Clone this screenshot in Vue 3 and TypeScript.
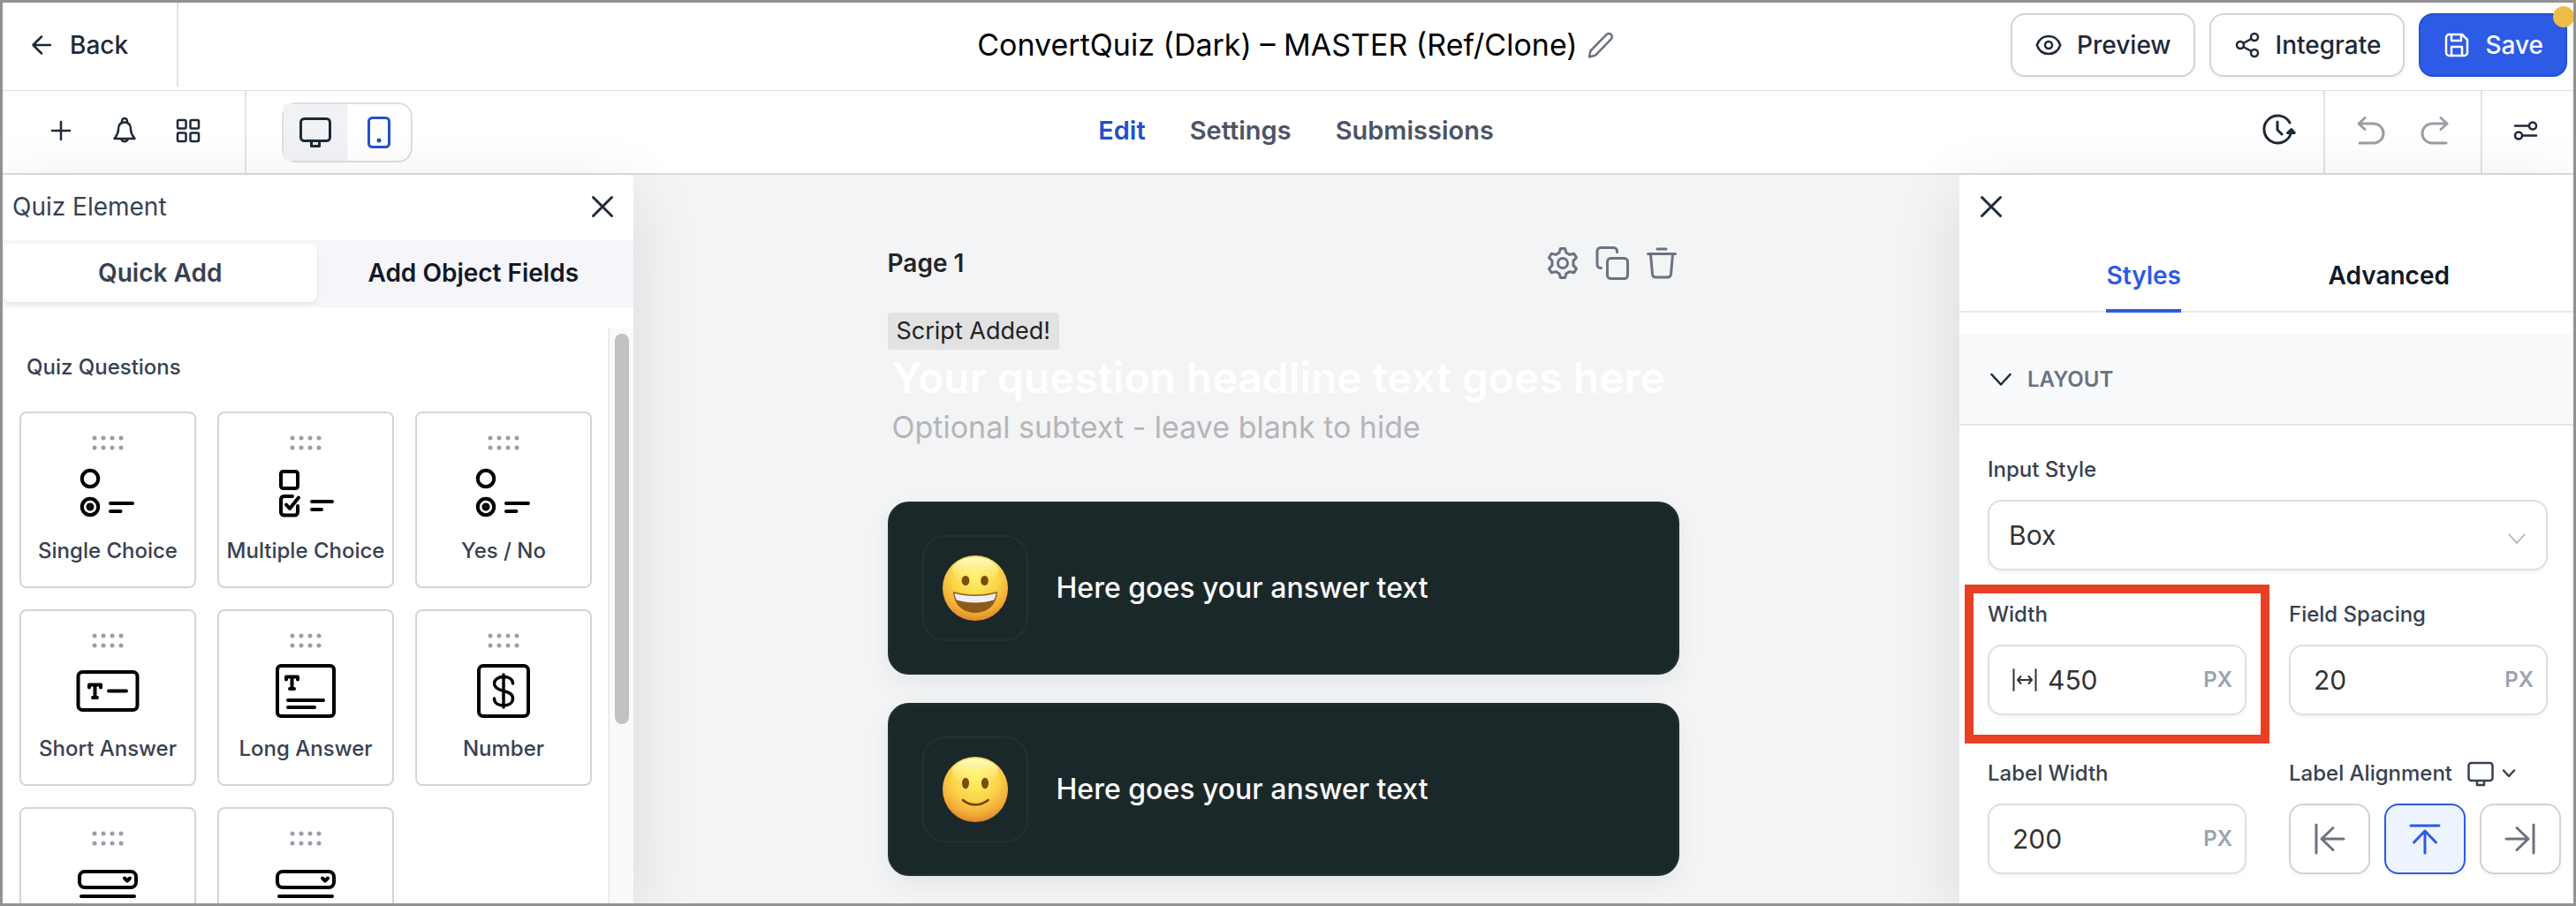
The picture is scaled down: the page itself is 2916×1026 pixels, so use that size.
<script setup lang="ts">
import { ref } from 'vue'

interface QuizElement {
  label: string
  icon: 'radio' | 'check' | 'short' | 'long' | 'number' | 'dropdown'
}

const elements: QuizElement[] = [
  { label: 'Single Choice', icon: 'radio' },
  { label: 'Multiple Choice', icon: 'check' },
  { label: 'Yes / No', icon: 'radio' },
  { label: 'Short Answer', icon: 'short' },
  { label: 'Long Answer', icon: 'long' },
  { label: 'Number', icon: 'number' },
  { label: '', icon: 'dropdown' },
  { label: '', icon: 'dropdown' },
]

const answers = [
  { text: 'Here goes your answer text', face: 'grin' },
  { text: 'Here goes your answer text', face: 'smile' },
]

const inputStyle = ref('Box')
const width = ref('450')
const spacing = ref('20')
const labelWidth = ref('200')
const alignment = ref('top')
const device = ref('mobile')
</script>

<template>
  <div class="app">
    <header class="topbar">
      <div class="top-left">
        <button class="back" type="button">
          <svg width="24" height="24" viewBox="0 0 24 24" class="line"><path d="M22 12H3M12 2.500L2.500 12l9.500 9.500" /></svg>
          Back
        </button>
      </div>
      <div class="title">
        <h1>ConvertQuiz (Dark) – MASTER (Ref/Clone)</h1>
        <button type="button" class="bare" aria-label="Rename">
          <svg width="32" height="32" viewBox="0 0 32 32" class="line pencil"><path d="M3 29.500l1.500-7L22.500 4.200a3.600 3.600 0 0 1 5.200 5.200L9.800 27.800z" /></svg>
        </button>
      </div>
      <div class="actions">
        <button type="button" class="btn">
          <svg width="32" height="32" viewBox="0 0 32 32" class="line"><path d="M2.800 16C5 9.500 10 6 16 6s11 3.500 13.200 10C27 22.500 22 26 16 26S5 22.500 2.800 16z" /><circle cx="16" cy="16" r="4" /></svg>
          Preview
        </button>
        <button type="button" class="btn">
          <svg width="32" height="32" viewBox="0 0 32 32" class="line"><circle cx="8" cy="16" r="4" /><circle cx="24" cy="7" r="4" /><circle cx="24" cy="25" r="4" /><path d="M11.500 14l9-5M11.500 18l9 5" /></svg>
          Integrate
        </button>
        <button type="button" class="btn primary">
          <svg width="32" height="32" viewBox="0 0 32 32" class="line"><path d="M7.500 4H22l6 6v14.500a3.500 3.500 0 0 1-3.500 3.500h-17A3.500 3.500 0 0 1 4 24.500v-17A3.500 3.500 0 0 1 7.500 4z" /><path d="M10 4.500V11h11V4.500M10 28V18h12v10" /></svg>
          Save
          <span class="unsaved"></span>
        </button>
      </div>
    </header>

    <div class="toolbar">
      <div class="tools-left">
        <div class="quick">
          <button type="button" class="bare" aria-label="Add">
            <svg width="32" height="32" viewBox="0 0 32 32" class="line"><path d="M16 6v20M6 16h20" /></svg>
          </button>
          <button type="button" class="bare" aria-label="Alerts">
            <svg width="32" height="32" viewBox="0 0 32 32" class="line"><path d="M16 6.500c-5 0-7 3.500-7 8 0 5-2 7-4.500 10.500h23C25 21.500 23 19.500 23 14.500c0-4.500-2-8-7-8z" /><path d="M13 6.500V5a3 3 0 0 1 6 0v1.500M12.500 25.500a3.600 3.600 0 0 0 7 0" /></svg>
          </button>
          <button type="button" class="bare" aria-label="Blocks">
            <svg width="32" height="32" viewBox="0 0 32 32" class="line"><rect x="4" y="4" width="9.500" height="9.500" rx="1.500" /><rect x="18.500" y="4" width="9.500" height="9.500" rx="1.500" /><rect x="4" y="18.500" width="9.500" height="9.500" rx="1.500" /><rect x="18.500" y="18.500" width="9.500" height="9.500" rx="1.500" /></svg>
          </button>
        </div>
        <div class="devices">
          <button type="button" class="device desktop" aria-label="Desktop" @click="device = 'desktop'">
            <svg width="40" height="40" viewBox="0 0 40 40" class="line thick"><rect x="3.500" y="4.500" width="33" height="25" rx="4" /><path d="M15.500 30v5.500h9V30" /></svg>
          </button>
          <button type="button" class="device" :class="{ on: device === 'mobile' }" aria-label="Mobile" @click="device = 'mobile'">
            <svg width="40" height="40" viewBox="0 0 40 40" class="line thick"><rect x="8.500" y="3.500" width="23" height="33" rx="4" /><circle cx="20" cy="29" r="1.500" fill="currentColor" stroke-width="2" /></svg>
          </button>
        </div>
      </div>
      <nav class="nav">
        <a href="#edit" class="current">Edit</a>
        <a href="#settings">Settings</a>
        <a href="#submissions">Submissions</a>
      </nav>
      <div class="tools-right">
        <button type="button" class="bare history" aria-label="History">
          <svg width="40" height="40" viewBox="0 0 40 40" class="line thick"><path d="M33 11A15.500 15.500 0 1 0 34.500 22" /><path d="M30.500 22.500l4.300-4 3.400 4zM19 10v9l5 5" /></svg>
        </button>
        <div class="undo">
          <button type="button" class="bare" aria-label="Undo">
            <svg width="36" height="36" viewBox="0 0 36 36" class="line thick"><path d="M11 3.500L4 10l7 6.500M4 10h17a11 11 0 0 1 0 22H5" /></svg>
          </button>
          <button type="button" class="bare" aria-label="Redo">
            <svg width="36" height="36" viewBox="0 0 36 36" class="line thick"><path d="M25 3.500L32 10l-7 6.500M32 10H15a11 11 0 0 0 0 22h16" /></svg>
          </button>
        </div>
        <button type="button" class="bare sliders" aria-label="Options">
          <svg width="32" height="32" viewBox="0 0 32 32" class="line"><circle cx="24" cy="10.500" r="4" /><path d="M4 10.500h15.500M12.500 21.500H28" /><circle cx="8" cy="21.500" r="4" /></svg>
        </button>
      </div>
    </div>

    <div class="body">
      <aside class="panel left">
        <div class="panel-head">
          <h2>Quiz Element</h2>
          <button type="button" class="bare" aria-label="Close elements">
            <svg width="32" height="32" viewBox="0 0 32 32" class="line thick"><path d="M5.500 5.500l21 21M26.500 5.500l-21 21" /></svg>
          </button>
        </div>
        <div class="segments">
          <button type="button" class="segment on">Quick Add</button>
          <button type="button" class="segment">Add Object Fields</button>
        </div>
        <div class="scroller">
          <div class="library">
            <h3>Quiz Questions</h3>
            <div class="grid">
              <button v-for="(item, i) in elements" :key="i" type="button" class="card">
                <svg width="40" height="20" viewBox="0 0 40 20" fill="#9a9ea8">
                  <template v-for="x in 4" :key="x">
                    <circle :cx="x * 10 - 5" cy="4" r="2.500" /><circle :cx="x * 10 - 5" cy="15" r="2.500" />
                  </template>
                </svg>
                <svg width="72" height="72" viewBox="0 0 72 72" class="glyph">
                  <g v-if="item.icon === 'radio'">
                    <circle cx="16" cy="20" r="9.200" /><circle cx="16" cy="52" r="9.200" /><circle cx="16" cy="52" r="2.500" />
                    <path d="M39 48h25M39 57h11.500" />
                  </g>
                  <g v-else-if="item.icon === 'check'">
                    <rect x="8" y="12" width="19" height="19" rx="2.500" />
                    <path d="M21 40h-9.500a3.500 3.500 0 0 0-3.500 3.500v14.500a3.500 3.500 0 0 0 3.500 3.500h12a3.500 3.500 0 0 0 3.500-3.500V51" />
                    <path d="M14 49.500l4 4.500L28 41.500M43 46h23M43 55h11" />
                  </g>
                  <g v-else-if="item.icon === 'short'">
                    <rect x="2.500" y="15" width="67" height="43" rx="5" />
                    <path d="M15 32.500v-3h13v3M21.500 29.500V44M19 44h5M37 36.500h20" />
                  </g>
                  <g v-else-if="item.icon === 'long'">
                    <rect x="4" y="8" width="64" height="57" rx="4" />
                    <path d="M14 23.500v-3h13v3M20.500 20.500V34M18 34h5M16 47h40M16 55h30" />
                  </g>
                  <g v-else-if="item.icon === 'number'">
                    <rect x="8" y="8" width="56" height="57" rx="5" />
                    <path d="M46.500 28c0-5-4.500-7.500-10.500-7.500S25.500 23.500 25.500 28s4 6.800 10.500 8.500 10.500 3.500 10.500 8.500-4.500 8-10.500 8-10.500-3-10.500-8M36 18v37" stroke-width="3.500" />
                  </g>
                  <g v-else>
                    <rect x="4" y="17" width="64" height="18" rx="6" />
                    <path d="M55 24.500l3 3 3-3" /><path d="M6 45h60" />
                  </g>
                </svg>
                <span v-if="item.label">{{ item.label }}</span>
              </button>
            </div>
          </div>
          <div class="track"><div class="thumb"></div></div>
        </div>
      </aside>

      <main class="canvas">
        <section class="page">
          <div class="page-head">
            <h2>Page 1</h2>
            <div class="page-tools">
              <button type="button" class="bare" aria-label="Page settings">
                <svg width="40" height="40" viewBox="0 0 40 40" class="line thick"><path d="M17.400 3.500h5.200l1.400 4.700 3.900 2.200 4.900-1.200 2.700 4.600-3.500 3.600v5.200l3.500 3.600-2.700 4.600-4.900-1.200-3.900 2.200-1.400 4.700h-5.200L16 31.800l-3.900-2.200-4.900 1.200-2.700-4.600L8 22.600v-5.200l-3.500-3.600 2.700-4.600 4.900 1.200L16 8.200z" /><circle cx="20" cy="20" r="5.500" /></svg>
              </button>
              <button type="button" class="bare" aria-label="Duplicate page">
                <svg width="40" height="40" viewBox="0 0 40 40" class="line thick"><path d="M7.500 25.500H7A4 4 0 0 1 3 21.500V6.500A4 4 0 0 1 7 2.500h14.500a4 4 0 0 1 4 4V7.500" /><rect x="14.500" y="14.500" width="23" height="23" rx="4" /></svg>
              </button>
              <button type="button" class="bare" aria-label="Delete page">
                <svg width="40" height="40" viewBox="0 0 40 40" class="line thick"><path d="M4.500 9.500h31M15 4h10M7.500 10l2 22.500a4 4 0 0 0 4 3.500h13a4 4 0 0 0 4-3.500l2-22.500" /></svg>
              </button>
            </div>
          </div>
          <span class="chip">Script Added!</span>
          <div class="question">
            <p class="headline">Your question headline text goes here</p>
            <p class="subtext">Optional subtext - leave blank to hide</p>
          </div>
          <div class="answers">
            <button v-for="(a, i) in answers" :key="i" type="button" class="answer">
              <span class="emoji">
                <svg width="76" height="76" viewBox="0 0 76 76">
                  <defs>
                    <radialGradient :id="'skin' + i" cx="50%" cy="30%" r="72%">
                      <stop offset="0" stop-color="#fff46a" />
                      <stop offset=".5" stop-color="#fbd449" />
                      <stop offset=".8" stop-color="#f2ac38" />
                      <stop offset="1" stop-color="#d9822b" />
                    </radialGradient>
                    <linearGradient :id="'shine' + i" x1="0" y1="0" x2="0" y2="1">
                      <stop offset="0" stop-color="#fffbd0" />
                      <stop offset="1" stop-color="#fff36b" stop-opacity="0" />
                    </linearGradient>
                  </defs>
                  <circle cx="38" cy="38" r="37" :fill="'url(#skin' + i + ')'" />
                  <ellipse cx="38" cy="18" rx="26" ry="15" :fill="'url(#shine' + i + ')'" />
                  <g v-if="a.face === 'grin'">
                    <ellipse cx="27" cy="29.500" rx="4.300" ry="5.500" fill="#7d4a10" />
                    <ellipse cx="48.500" cy="29.500" rx="4.300" ry="5.500" fill="#7d4a10" />
                    <path d="M13 42c16 4.500 34 4.500 50 0C62 57 52 66 38 66S14 57 13 42z" fill="#8e5a1c" />
                    <path d="M14.500 44c15 4 32 4 47 0-.5 3-1.200 5.500-2.500 7.500-13 4-29 4-42 0-1.300-2-2-4.500-2.500-7.500z" fill="#eff0f6" />
                  </g>
                  <g v-else>
                    <ellipse cx="27" cy="31" rx="4" ry="6.200" fill="#7d4a10" />
                    <ellipse cx="49" cy="31" rx="4" ry="6.200" fill="#7d4a10" />
                    <path d="M24 50c8 7 20 7 28.500 0" fill="none" stroke="#6b4208" stroke-width="2.500" stroke-linecap="round" />
                  </g>
                </svg>
              </span>
              {{ a.text }}
            </button>
          </div>
        </section>
      </main>

      <aside class="panel right">
        <div class="close-row">
          <button type="button" class="bare" aria-label="Close styles">
            <svg width="32" height="32" viewBox="0 0 32 32" class="line thick"><path d="M5.500 5.500l21 21M26.500 5.500l-21 21" /></svg>
          </button>
        </div>
        <div class="tabs">
          <div class="tab-cell"><button type="button" class="tab on">Styles</button></div>
          <div class="tab-cell"><button type="button" class="tab">Advanced</button></div>
        </div>
        <button type="button" class="accordion">
          <svg width="24" height="24" viewBox="0 0 24 24" class="line"><path d="M1.500 6L12 17.500 22.500 6" /></svg>
          LAYOUT
        </button>
        <div class="form">
          <div class="field wide">
            <label for="input-style">Input Style</label>
            <div class="control">
              <select id="input-style" v-model="inputStyle">
                <option>Box</option>
                <option>Line</option>
              </select>
              <svg width="20" height="12" viewBox="0 0 20 12" class="caret"><path d="M1 1l9 10 9-10" /></svg>
            </div>
          </div>
          <div class="field marked">
            <label for="width">Width</label>
            <div class="control box">
              <svg width="28" height="28" viewBox="0 0 28 28" class="line measure"><path d="M1.500 2v24M26.500 2v24M6 14h16M9.500 10L6 14l3.500 4M18.500 10l3.500 4-3.500 4" /></svg>
              <input id="width" v-model="width" type="text" />
              <span class="unit">PX</span>
            </div>
          </div>
          <div class="field">
            <label for="spacing">Field Spacing</label>
            <div class="control box">
              <input id="spacing" v-model="spacing" type="text" />
              <span class="unit">PX</span>
            </div>
          </div>
          <div class="field">
            <label for="label-width">Label Width</label>
            <div class="control box">
              <input id="label-width" v-model="labelWidth" type="text" />
              <span class="unit">PX</span>
            </div>
          </div>
          <div class="field">
            <div class="label-row">
              <span id="align-label">Label Alignment</span>
              <button type="button" class="bare picker" aria-label="Choose device">
                <svg width="32" height="32" viewBox="0 0 32 32" class="line"><rect x="2.500" y="4" width="27" height="20" rx="3" /><path d="M12 24.500V29h8v-4.500" /></svg>
                <svg width="16" height="12" viewBox="0 0 16 12" class="line"><path d="M2 2.500L8 9l6-6.500" /></svg>
              </button>
            </div>
            <div class="aligns" role="group" aria-labelledby="align-label">
              <button type="button" class="align" :class="{ on: alignment === 'left' }" aria-label="Left" @click="alignment = 'left'">
                <svg width="36" height="36" viewBox="0 0 36 36" class="line thick"><path d="M3 2v32M34 18H9M22 5.500L9 18l13 12.500" /></svg>
              </button>
              <button type="button" class="align" :class="{ on: alignment === 'top' }" aria-label="Top" @click="alignment = 'top'">
                <svg width="36" height="36" viewBox="0 0 36 36" class="line thick"><path d="M2 3h32M18 34V9M5.500 22L18 9l12.500 13" /></svg>
              </button>
              <button type="button" class="align" :class="{ on: alignment === 'right' }" aria-label="Right" @click="alignment = 'right'">
                <svg width="36" height="36" viewBox="0 0 36 36" class="line thick"><path d="M33 2v32M2 18h25M14 5.500L27 18 14 30.500" /></svg>
              </button>
            </div>
          </div>
        </div>
      </aside>
    </div>
  </div>
</template>

<style>
body {
  margin: 0;
  overflow: hidden;
}
</style>

<style scoped>
.app {
  box-sizing: border-box;
  display: flex;
  flex-direction: column;
  height: 100vh;
  border: 3px solid #929292;
  overflow: hidden;
  background: #fff;
  color: #1f2937;
  font-family: Inter, 'Liberation Sans', sans-serif;
  font-size: 28px;
  line-height: 36px;
}
.app * {
  box-sizing: border-box;
}
h1, h2, h3, p {
  margin: 0;
}
button, input, select {
  font: inherit;
  color: inherit;
}
button {
  cursor: pointer;
}
svg {
  display: block;
  flex: none;
}
.line {
  fill: none;
  stroke: currentColor;
  stroke-width: 2.5;
  stroke-linecap: round;
  stroke-linejoin: round;
}
.thick {
  stroke-width: 3;
}
.bare {
  display: flex;
  padding: 0;
  border: 0;
  background: none;
}

/* top bar */
.topbar {
  display: grid;
  grid-template-columns: 1fr auto 1fr;
  height: 100px;
  flex: none;
  border-bottom: 1px solid #dfdfe1;
}
.top-left {
  display: flex;
}
.back {
  display: flex;
  align-items: center;
  gap: 20px;
  width: 199px;
  height: 95px;
  padding: 0 0 0 32px;
  border: 0;
  border-right: 2px solid #e2e3e6;
  background: none;
  font-size: 28px;
  font-weight: 500;
}
.title {
  display: flex;
  align-items: center;
  gap: 10px;
  padding: 0 0 4px 18px;
  color: #000;
}
.title h1 {
  font-size: 34px;
  font-weight: 400;
  line-height: 44px;
}
.pencil {
  color: #6b7280;
}
.actions {
  display: flex;
  align-items: center;
  justify-content: flex-end;
  gap: 16px;
  padding: 0 7px 4px 0;
}
.btn {
  position: relative;
  display: flex;
  align-items: center;
  gap: 16px;
  height: 72px;
  padding: 0 25px;
  border: 2px solid #d1d5db;
  border-radius: 16px;
  background: #fff;
  font-size: 28px;
  font-weight: 500;
  box-shadow: 0 2px 4px rgba(0, 0, 0, 0.05);
}
.primary {
  border-color: #244fd0;
  background: #2d5be6;
  color: #fff;
}
.unsaved {
  position: absolute;
  top: -10px;
  right: -10px;
  width: 24px;
  height: 24px;
  border-radius: 50%;
  background: #eebd48;
}

/* toolbar */
.toolbar {
  display: grid;
  grid-template-columns: 1fr auto 1fr;
  height: 95px;
  flex: none;
  border-bottom: 2px solid #dcdcde;
}
.tools-left {
  display: flex;
  align-items: center;
  gap: 40px;
}
.quick {
  display: flex;
  align-items: center;
  justify-content: space-between;
  width: 276px;
  height: 100%;
  padding: 0 48px 4px 50px;
  border-right: 2px solid #e2e3e6;
}
.devices {
  display: flex;
  height: 68px;
  border: 2px solid #dcdee2;
  border-radius: 16px;
}
.device {
  display: flex;
  align-items: center;
  justify-content: center;
  width: 72px;
  padding: 0;
  border: 0;
  background: none;
}
.desktop {
  background: #f0f2f6;
}
.device.on {
  color: #2450c8;
}
.nav {
  display: flex;
  align-items: center;
  gap: 50px;
  padding: 0 0 4px 18px;
  font-size: 29px;
  font-weight: 600;
}
.nav a {
  color: #4b5563;
  text-decoration: none;
}
.nav .current {
  color: #2450c8;
}
.tools-right {
  display: flex;
  align-items: stretch;
  justify-content: flex-end;
}
.tools-right .bare {
  align-items: center;
  padding-bottom: 4px;
}
.history {
  padding-right: 31px;
}
.undo {
  display: flex;
  gap: 36px;
  padding: 0 34px;
  border: solid #e2e3e6;
  border-width: 0 2px;
  color: #9a9ea5;
}
.sliders {
  justify-content: center;
  width: 103px;
  padding-right: 6px;
}

/* body */
.body {
  display: flex;
  flex: 1;
  min-height: 0;
}
.panel {
  position: relative;
  z-index: 1;
  display: flex;
  flex-direction: column;
  flex: none;
  background: #fff;
  box-shadow: 0 20px 80px rgba(0, 0, 0, 0.11);
}
.left {
  width: 714px;
  border-top-right-radius: 6px;
}
.panel-head {
  display: flex;
  align-items: center;
  justify-content: space-between;
  height: 74px;
  flex: none;
  padding: 0 19px 2px 11px;
}
.panel-head h2 {
  color: #374151;
  font-size: 28px;
  font-weight: 400;
}
.segments {
  display: flex;
  height: 76px;
  flex: none;
  padding: 4px 4px 6px 1px;
  background: #f5f5fa;
}
.segment {
  flex: 1;
  padding: 0;
  border: 0;
  border-radius: 8px;
  background: none;
  color: #111827;
  font-weight: 600;
}
.segment.on {
  background: #fff;
  color: #374151;
  box-shadow: 0 2px 4px rgba(0, 0, 0, 0.08);
}
.scroller {
  display: flex;
  flex: 1;
  min-height: 0;
  padding-top: 24px;
}
.library {
  flex: 1;
  padding: 28px 16px 0 19px;
  overflow: hidden;
}
.library h3 {
  padding-left: 8px;
  color: #374151;
  font-size: 24px;
  font-weight: 500;
  line-height: 32px;
}
.grid {
  display: grid;
  grid-template-columns: repeat(3, 200px);
  gap: 24px;
  padding-top: 34px;
}
.card {
  display: flex;
  flex-direction: column;
  align-items: center;
  height: 200px;
  padding: 24px 0 0;
  border: 2px solid #d3d5d9;
  border-radius: 8px;
  background: #fff;
  color: #374151;
  font-size: 24px;
  font-weight: 500;
  line-height: 32px;
  white-space: nowrap;
}
.glyph {
  margin: 10px 0 14px;
  fill: none;
  stroke: #000;
  stroke-width: 4;
  stroke-linecap: round;
  stroke-linejoin: round;
}
.track {
  width: 29px;
  padding: 6px 6px 0;
  border-left: 2px solid #ebebeb;
  background: #fafafa;
}
.thumb {
  width: 16px;
  height: 442px;
  border-radius: 8px;
  background: #c1c1c1;
}

/* canvas */
.canvas {
  flex: 1;
  display: flex;
  justify-content: center;
  min-width: 0;
  padding: 80px 30px 0 0;
  background: #f3f4f6;
}
.page {
  width: 896px;
}
.page-head {
  display: flex;
  align-items: center;
  justify-content: space-between;
  height: 40px;
}
.page-head h2 {
  color: #222428;
  font-size: 28px;
  font-weight: 600;
}
.page-tools {
  display: flex;
  gap: 16px;
  color: #6b7280;
}
.chip {
  display: inline-block;
  margin-top: 36px;
  padding: 3px 10px;
  border-radius: 4px;
  background: #e2e2e2;
  color: #222;
  font-size: 27px;
}
.question {
  padding: 0 5px;
}
.headline {
  color: #fff;
  font-size: 48px;
  font-weight: 600;
  line-height: 64px;
  white-space: nowrap;
}
.subtext {
  color: #b5b5b7;
  font-size: 34px;
  line-height: 48px;
}
.answers {
  display: flex;
  flex-direction: column;
  gap: 32px;
  padding-top: 60px;
}
.answer {
  display: flex;
  align-items: center;
  gap: 32px;
  height: 196px;
  padding: 0 37px;
  border: 2px solid #203031;
  border-radius: 24px;
  background: #1b2829;
  color: #fff;
  font-size: 32px;
  font-weight: 500;
  box-shadow: 0 10px 30px rgba(0, 0, 0, 0.06);
}
.emoji {
  display: flex;
  align-items: center;
  justify-content: center;
  width: 120px;
  height: 120px;
  border: 2px solid #223133;
  border-radius: 26px;
}

/* styles panel */
.right {
  width: 695px;
  border-top-left-radius: 6px;
}
.close-row {
  height: 74px;
  padding: 20px;
}
.tabs {
  display: grid;
  grid-template-columns: 1fr 1fr;
  height: 82px;
  padding: 0 70px;
  border-bottom: 2px solid #ececee;
}
.tab-cell {
  display: flex;
  justify-content: center;
}
.tab {
  height: 82px;
  padding: 2px 0 0;
  border: 0;
  border-bottom: 4px solid transparent;
  background: none;
  color: #111827;
  font-size: 28px;
  font-weight: 600;
}
.tab.on {
  border-color: #2d5be6;
  color: #2d5be6;
}
.accordion {
  display: flex;
  align-items: center;
  gap: 18px;
  height: 104px;
  margin-top: 24px;
  padding: 2px 0 0 35px;
  border: 0;
  border-bottom: 2px solid #e6e7ea;
  background: #f8fafb;
  color: #6b7280;
  font-size: 24px;
  font-weight: 600;
}
.accordion svg {
  color: #1f2937;
}
.form {
  display: grid;
  grid-template-columns: 1fr 1fr;
  gap: 50px 48px;
  padding: 34px 29px 0 32px;
}
.wide {
  grid-column: span 2;
}
.wide + .field,
.wide + .field + .field {
  margin-top: -16px;
}
.field {
  position: relative;
  min-width: 0;
  color: #374151;
  font-size: 24px;
  font-weight: 500;
  line-height: 32px;
}
.field > label {
  display: block;
  margin-bottom: 18px;
}
.marked::after {
  content: '';
  position: absolute;
  inset: -18px -26px -32px -26px;
  border: 10px solid #e84025;
  pointer-events: none;
}
.control {
  position: relative;
  color: #333;
  font-size: 30px;
  font-weight: 400;
}
select {
  display: block;
  width: 100%;
  height: 80px;
  padding: 0 22px;
  border: 2px solid #dedfe1;
  border-radius: 16px;
  appearance: none;
  background: #fff;
  box-shadow: 0 2px 4px rgba(0, 0, 0, 0.05);
}
.caret {
  position: absolute;
  top: 38px;
  right: 25px;
  fill: none;
  stroke: #bfbfbf;
  stroke-width: 2;
}
.box {
  display: flex;
  align-items: center;
  height: 80px;
  padding: 0 14px 0 26px;
  border: 2px solid #dedfe1;
  border-radius: 16px;
  background: #fff;
  box-shadow: 0 2px 4px rgba(0, 0, 0, 0.05);
}
.measure {
  margin-right: 12px;
  stroke-width: 2;
}
.box input {
  flex: 1;
  min-width: 0;
  width: 100%;
  padding: 0;
  border: 0;
  outline: 0;
  background: none;
}
.unit {
  color: #9ca3af;
  font-size: 24px;
  font-weight: 600;
}
.label-row {
  display: flex;
  align-items: center;
  gap: 16px;
  height: 32px;
  margin-bottom: 18px;
  white-space: nowrap;
}
.picker {
  align-items: center;
  gap: 8px;
}
.aligns {
  display: flex;
  gap: 16px;
}
.align {
  display: flex;
  align-items: center;
  justify-content: center;
  flex: none;
  width: 92px;
  height: 80px;
  padding: 0;
  border: 2px solid #d1d3d8;
  border-radius: 16px;
  background: #fff;
  color: #6b7280;
  box-shadow: 0 2px 4px rgba(0, 0, 0, 0.05);
}
.align.on {
  border-color: #2d5be0;
  background: #eef4fd;
  color: #2d5be0;
}
</style>
